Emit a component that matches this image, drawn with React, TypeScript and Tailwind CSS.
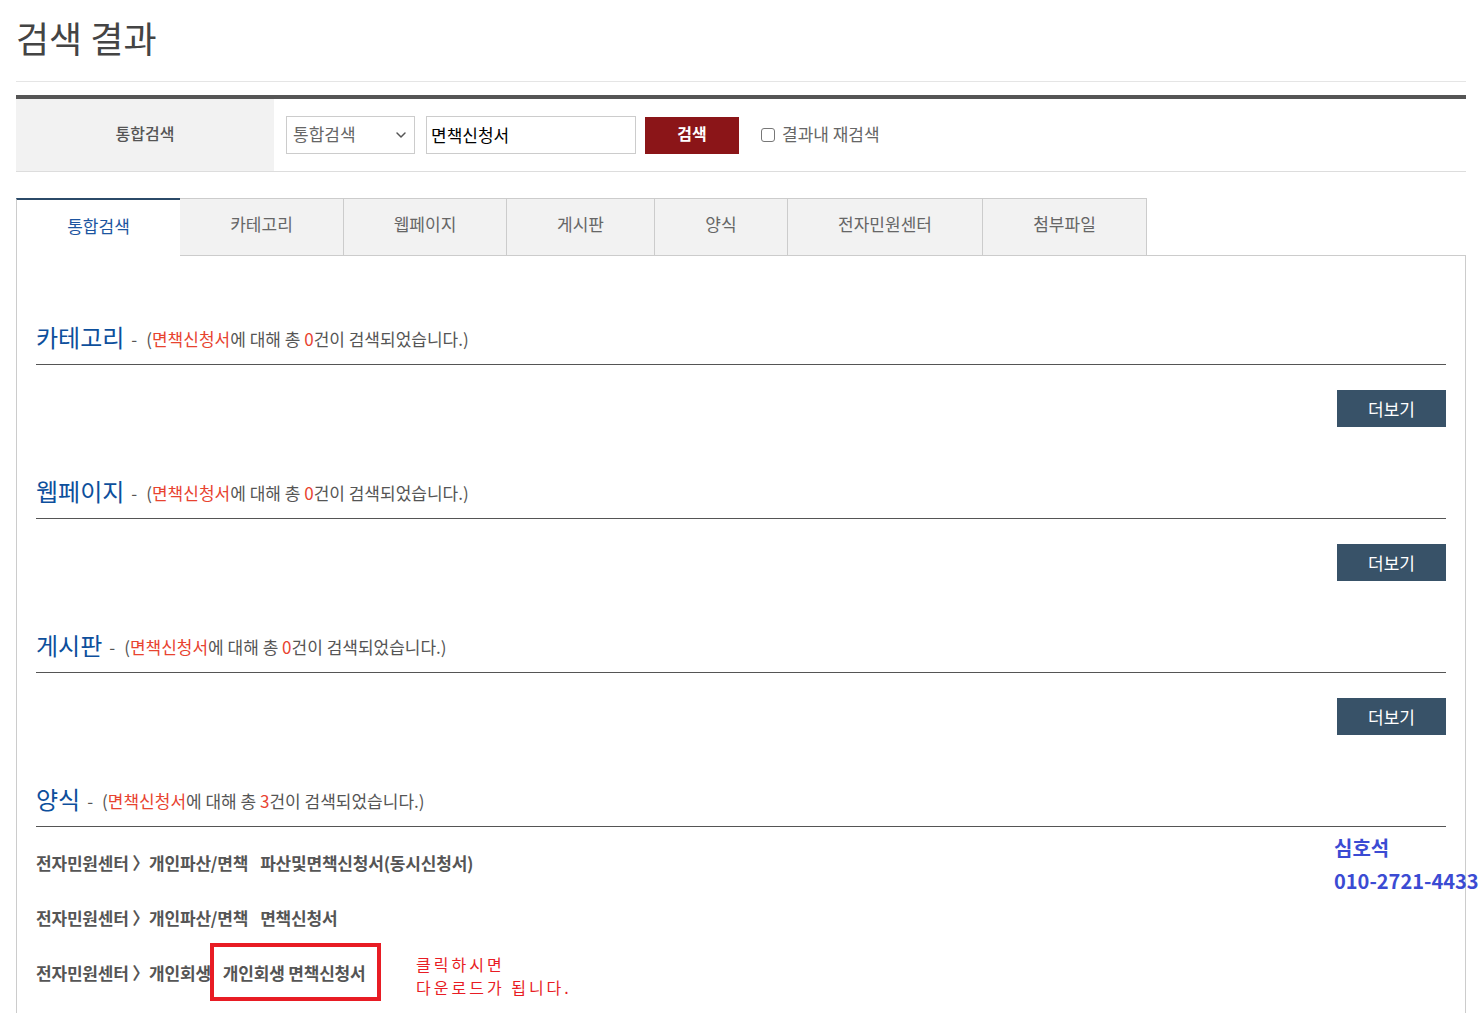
import { ChevronDown } from "lucide-react";

const tabs = [
  { label: "통합검색", w: "w-[164px]" },
  { label: "카테고리", w: "w-[164px]" },
  { label: "웹페이지", w: "w-[163px]" },
  { label: "게시판", w: "w-[148px]" },
  { label: "양식", w: "w-[133px]" },
  { label: "전자민원센터", w: "w-[195px]" },
  { label: "첨부파일", w: "w-[164px]" },
];

const forms = [
  { path: "전자민원센터 〉개인파산/면책", title: "파산및면책신청서(동시신청서)" },
  { path: "전자민원센터 〉개인파산/면책", title: "면책신청서" },
  { path: "전자민원센터 〉개인회생", title: "개인회생 면책신청서" },
];

function SectionHead({ title, count }: { title: string; count: number }) {
  return (
    <div className="flex h-[55px] items-center border-b border-[#555]">
      <h3 className="text-[24px] leading-none text-[#0d4f9c]">{title}</h3>
      <p className="ml-[7px] pt-[3px] text-[17px] text-[#555]">
        <span>-</span>
        <span className="ml-[9px]">
          (<span className="text-[#e8432f]">면책신청서</span>에 대해 총{" "}
          <span className="text-[#e8432f]">{count}</span>건이 검색되었습니다.)
        </span>
      </p>
    </div>
  );
}

function MoreButton() {
  return (
    <div className="mt-[25px] mb-[37px] flex justify-end">
      <button className="h-[37px] w-[109px] bg-[#385268] text-[17px] text-white">더보기</button>
    </div>
  );
}

export default function App() {
  return (
    <div
      className="relative min-h-screen bg-white px-4 text-[#555]"
      style={{ fontFamily: '"Noto Sans CJK KR", "Noto Sans", sans-serif' }}
    >
      <h1 className="flex h-[82px] items-center border-b border-[#e5e5e5] pb-[8px] text-[36px] text-[#444]">
        검색 결과
      </h1>

      <div className="mt-[13px] flex h-[77px] border-t-4 border-b border-[#555] border-b-[#ddd]">
        <div className="flex w-[258px] items-center justify-center bg-[#f2f2f2] pb-[4px] text-[16px] font-medium text-[#555]">
          통합검색
        </div>
        <div className="flex items-center pl-3">
          <div className="flex h-[38px] w-[129px] items-center justify-between border border-[#ccc] pl-[6px] pr-[5px] pb-[3px] text-[17px] text-[#666]">
            통합검색
            <ChevronDown size={16} strokeWidth={2.2} className="mt-[3px] text-[#555]" />
          </div>
          <div className="ml-[11px] flex h-[38px] w-[210px] items-center border border-[#ccc] px-[4px] pb-[1px] text-[17px] text-black">
            면책신청서
          </div>
          <button className="ml-[9px] h-[37px] w-[94px] bg-[#8b1518] pb-[4px] text-[16px] font-bold text-white">
            검색
          </button>
          <label className="ml-[22px] flex items-center gap-[7px] pb-[3px] text-[17px] text-[#666]">
            <span className="mt-[3px] h-[14px] w-[14px] rounded-[3px] border border-[#777]" />
            결과내 재검색
          </label>
        </div>
      </div>

      <div className="mt-[26px] flex h-[58px]">
        {tabs.map((t, i) =>
          i === 0 ? (
            <div
              key={t.label}
              className={`${t.w} flex items-center justify-center border-l border-[#ccc] border-t-2 border-t-[#2b4a68] bg-white pb-[4px] text-[17px] text-[#1c55a0]`}
            >
              {t.label}
            </div>
          ) : (
            <div
              key={t.label}
              className={`${t.w} flex items-center justify-center border-t border-r border-b border-[#ccc] bg-[#f2f2f2] pb-[7px] text-[17px] text-[#666]`}
            >
              {t.label}
            </div>
          )
        )}
        <div className="flex-1 border-b border-[#ccc]" />
      </div>

      <div className="border-x border-[#ccc] px-[19px] pt-[54px] pb-[13px]">
        <SectionHead title="카테고리" count={0} />
        <MoreButton />
        <SectionHead title="웹페이지" count={0} />
        <MoreButton />
        <SectionHead title="게시판" count={0} />
        <MoreButton />
        <SectionHead title="양식" count={3} />
        <ul className="pt-[8px]">
          {forms.map((f, i) => (
            <li key={i} className="flex h-[55px] items-center text-[17px] font-bold tracking-[-0.2px] text-[#555]">
              <span>{f.path}</span>
              <span className="ml-[12px]">{f.title}</span>
            </li>
          ))}
        </ul>
      </div>

      {/* annotations laid over the screenshot */}
      <div className="absolute left-[210px] top-[943px] h-[58px] w-[171px] border-4 border-[#e81c24]" />
      <div className="absolute left-[416px] top-[953px] text-[16px] leading-[23px] tracking-[3px] text-[#e81c24]">
        <p>클릭하시면</p>
        <p>다운로드가 됩니다.</p>
      </div>
      <div className="absolute left-[1334px] top-[831px] whitespace-nowrap text-[20px] font-bold leading-[33px] text-[#3b4bd3]">
        <p>심호석</p>
        <p>010-2721-4433</p>
      </div>
    </div>
  );
}
